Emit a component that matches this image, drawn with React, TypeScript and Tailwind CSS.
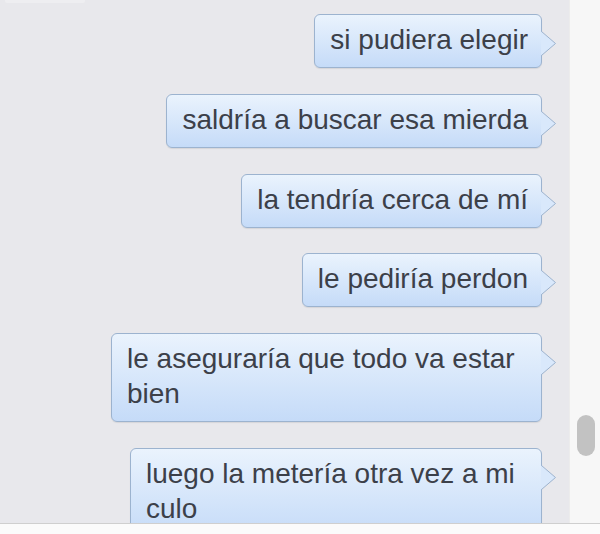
import React from "react";

type Message = {
    lines: string[];
    width?: string;
};

const messages: Message[] = [
    { lines: ["si pudiera elegir"] },
    { lines: ["saldría a buscar esa mierda"] },
    { lines: ["la tendría cerca de mí"] },
    { lines: ["le pediría perdon"] },
    { lines: ["le aseguraría que todo va estar", "bien"], width: "w-[431px]" },
    { lines: ["luego la metería otra vez a mi", "culo"], width: "w-[412px]" },
];

function Bubble({ lines, width }: Message): JSX.Element {
    return (
        <div className="relative mr-[27px]">
            <div className={`${width ?? ""} rounded-[6px] border border-[#9cb3cf] bg-linear-to-b from-[#eaf3fd] to-[#c5dbf8] pl-[15px] pr-[13px] pt-[7px] pb-[10px] text-[28px] leading-[35px] text-[#3c4049] whitespace-nowrap shadow-[0_1px_1px_rgba(0,0,0,0.08)]`}>
                {lines.map((line, i) => (
                    <div key={i}>{line}</div>
                ))}
            </div>
            {/* tail */}
            <svg className="absolute top-[17px] right-[-15px]" width="16" height="26" viewBox="0 0 16 26">
                <polygon points="0,0.5 14.5,12.5 0,24.5" fill="#d9e8fb" />
                <polyline points="0.5,0.5 14.5,12.5 0.5,24.5" fill="none" stroke="#9cb3cf" strokeWidth="1" />
            </svg>
        </div>
    );
}

export default function App(): JSX.Element {
    return (
        <div className="w-[600px] h-[534px] flex flex-col overflow-hidden" style={{ fontFamily: '"Liberation Sans", Arial, sans-serif' }}>
            <div className="flex flex-1 min-h-0">
                <div className="flex-1 bg-[#e8e8ec] overflow-hidden">
                    <div className="ml-[5px] h-[3px] w-[80px] rounded-b-[2px] bg-[#eeeef1]" />
                    <div className="flex flex-col items-end gap-[25.75px] pt-[11px]">
                        {messages.map((m, i) => (
                            <Bubble key={i} lines={m.lines} width={m.width} />
                        ))}
                    </div>
                </div>
                <div className="w-[31px] bg-[#f7f7f7] border-l border-[#ececec] pt-[415px] pl-[7px]">
                    <div className="w-[18px] h-[41px] rounded-full bg-[#c2c2c2]" />
                </div>
            </div>
            <div className="h-[11px] bg-[#fbfbfb] border-t border-[#cfcfcf]" />
        </div>
    );
}
